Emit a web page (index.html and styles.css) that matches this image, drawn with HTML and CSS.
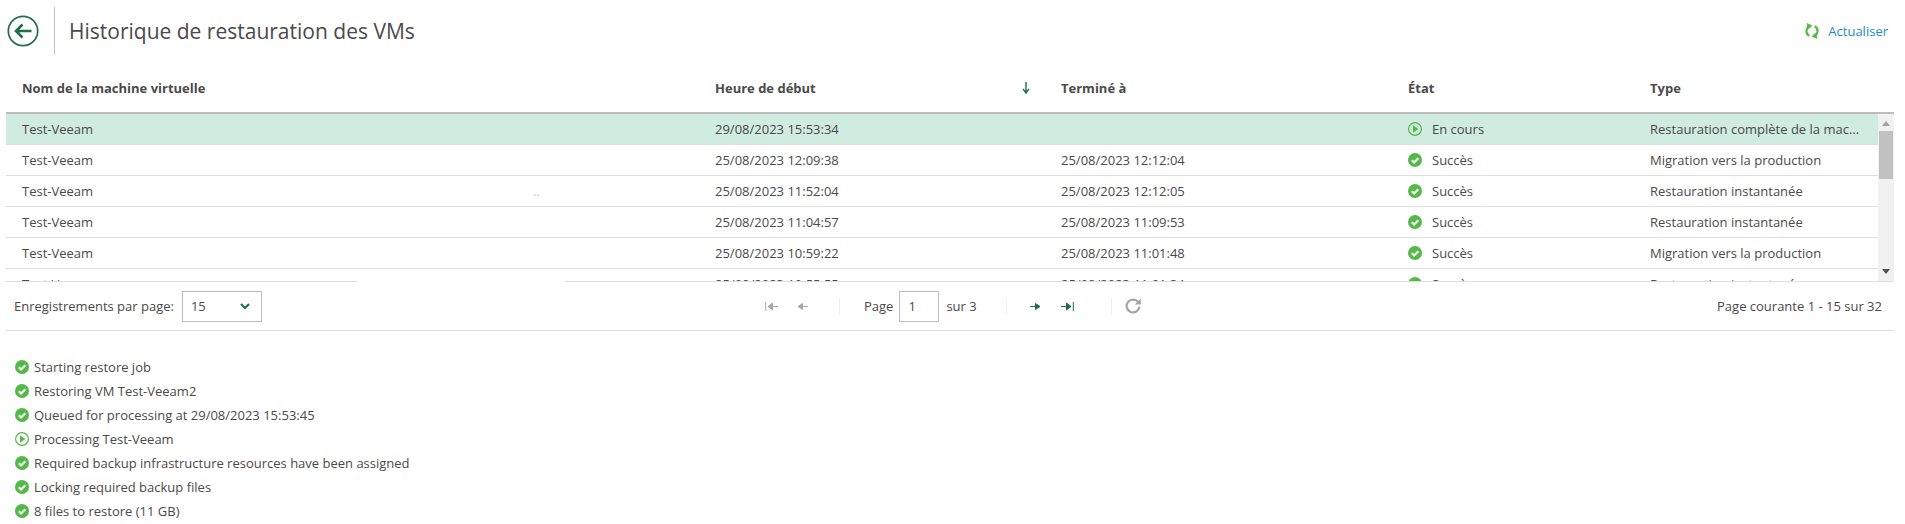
FILE: index.html
```html
<!DOCTYPE html>
<html lang="fr">
<head>
<meta charset="utf-8">
<title>Historique de restauration des VMs</title>
<link rel="stylesheet" href="styles.css">
</head>
<body>
<svg class="defs" width="0" height="0" aria-hidden="true">
  <symbol id="ok" viewBox="0 0 14 14">
    <circle cx="7" cy="7" r="7" fill="#54b948"/>
    <path d="M3.8 7.2 6.1 9.5 10.3 5.2" fill="none" stroke="#fff" stroke-width="2.1"/>
  </symbol>
  <symbol id="run" viewBox="0 0 14 14">
    <circle cx="7" cy="7" r="6.4" fill="none" stroke="#54b948" stroke-width="1.2"/>
    <path d="M5 3.2 10.4 7 5 10.8Z" fill="#54b948"/>
  </symbol>
</svg>
<main class="page">
  <header class="topbar">
    <svg class="back" width="32" height="32" viewBox="0 0 32 32">
      <circle cx="16" cy="16" r="14.7" fill="none" stroke="#236d4c" stroke-width="1.7"/>
      <path d="M24.5 16H10M15.5 9.5 9 16l6.5 6.5" fill="none" stroke="#236d4c" stroke-width="2.6"/>
    </svg>
    <span class="divider"></span>
    <h1 class="title">Historique de restauration des VMs</h1>
    <a class="refresh-link">
      <svg width="14" height="16" viewBox="0 0 14 16">
        <path d="M6 2.8A5.4 5.4 0 0 0 4.2 12.8M8 13.2A5.4 5.4 0 0 0 9.8 3.2" fill="none" stroke="#54b948" stroke-width="2.2"/>
        <path d="M1.6 0 7.4 2.4 2.8 6.4ZM12.4 16 6.6 13.6 11.2 9.6Z" fill="#54b948"/>
      </svg>
      <span>Actualiser</span>
    </a>
  </header>

  <div class="grid-row head">
    <div class="cell">Nom de la machine virtuelle</div>
    <div class="cell"></div>
    <div class="cell sort">Heure de début
      <svg width="8" height="12" viewBox="0 0 8 12"><path d="M4 0V10M1 7l3 4 3-4" fill="none" stroke="#236d4c" stroke-width="1.4"/></svg>
    </div>
    <div class="cell">Terminé à</div>
    <div class="cell">État</div>
    <div class="cell">Type</div>
  </div>

  <div class="table-body">
    <div class="rows">
      <div class="grid-row row selected">
        <div class="cell">Test-Veeam</div><div class="cell"></div>
        <div class="cell">29/08/2023 15:53:34</div><div class="cell"></div>
        <div class="cell state"><svg class="ico"><use href="#run"/></svg>En cours</div>
        <div class="cell ellipsis">Restauration complète de la machine virtuelle</div>
      </div>
      <div class="grid-row row">
        <div class="cell">Test-Veeam</div><div class="cell"></div>
        <div class="cell">25/08/2023 12:09:38</div><div class="cell">25/08/2023 12:12:04</div>
        <div class="cell state"><svg class="ico"><use href="#ok"/></svg>Succès</div>
        <div class="cell ellipsis">Migration vers la production</div>
      </div>
      <div class="grid-row row">
        <div class="cell">Test-Veeam</div><div class="cell dots">..</div>
        <div class="cell">25/08/2023 11:52:04</div><div class="cell">25/08/2023 12:12:05</div>
        <div class="cell state"><svg class="ico"><use href="#ok"/></svg>Succès</div>
        <div class="cell ellipsis">Restauration instantanée</div>
      </div>
      <div class="grid-row row">
        <div class="cell">Test-Veeam</div><div class="cell"></div>
        <div class="cell">25/08/2023 11:04:57</div><div class="cell">25/08/2023 11:09:53</div>
        <div class="cell state"><svg class="ico"><use href="#ok"/></svg>Succès</div>
        <div class="cell ellipsis">Restauration instantanée</div>
      </div>
      <div class="grid-row row">
        <div class="cell">Test-Veeam</div><div class="cell"></div>
        <div class="cell">25/08/2023 10:59:22</div><div class="cell">25/08/2023 11:01:48</div>
        <div class="cell state"><svg class="ico"><use href="#ok"/></svg>Succès</div>
        <div class="cell ellipsis">Migration vers la production</div>
      </div>
      <div class="grid-row row">
        <div class="cell">Test-Veeam</div><div class="cell"></div>
        <div class="cell">25/08/2023 10:55:55</div><div class="cell">25/08/2023 11:01:34</div>
        <div class="cell state"><svg class="ico"><use href="#ok"/></svg>Succès</div>
        <div class="cell ellipsis">Restauration instantanée</div>
      </div>
    </div>
    <div class="scrollbar">
      <span class="arrow up"></span>
      <span class="thumb"></span>
      <span class="arrow down"></span>
    </div>
  </div>

  <footer class="pager">
    <span class="patch"></span>
    <div class="per-page">
      <span>Enregistrements par page:</span>
      <div class="select">
        <span>15</span>
        <svg width="10" height="7" viewBox="0 0 10 7"><path d="M1 1l4 4 4-4" fill="none" stroke="#236d4c" stroke-width="2.2"/></svg>
      </div>
    </div>
    <div class="nav">
      <svg class="n1" width="13" height="9" viewBox="0 0 13 9"><path d="M.7 0V9M13 4.5H4M7.5 1 3 4.5 7.5 8Z" fill="#a8a8a8" stroke="#a8a8a8" stroke-width="1"/></svg>
      <svg class="n2" width="11" height="9" viewBox="0 0 11 9"><path d="M11 4.5H3M5.5 1.5 1 4.5 5.5 7.5Z" fill="#a8a8a8" stroke="#a8a8a8" stroke-width="1"/></svg>
      <span class="sep s1"></span>
      <span class="n3">Page</span>
      <span class="page-input">1</span>
      <span class="n4">sur 3</span>
      <span class="sep s2"></span>
      <svg class="n5" width="11" height="9" viewBox="0 0 11 9"><path d="M0 4.5H8M5.5 1.5 10 4.5 5.5 7.5Z" fill="#236d4c" stroke="#236d4c" stroke-width="1"/></svg>
      <svg class="n6" width="13" height="9" viewBox="0 0 13 9"><path d="M12.3 0V9M0 4.5H9M5.5 1 10 4.5 5.5 8Z" fill="#236d4c" stroke="#236d4c" stroke-width="1"/></svg>
      <span class="sep s3"></span>
      <svg class="n7" width="16" height="16" viewBox="0 0 16 16"><path d="M13.2 4.2A6.4 6.4 0 1 0 14.4 8.6" fill="none" stroke="#a5a5a5" stroke-width="2.2"/><path d="M15.8 .6V6.6H9.8Z" fill="#a5a5a5"/></svg>
    </div>
    <div class="summary">Page courante 1 - 15 sur 32</div>
  </footer>

  <ul class="log">
    <li><svg class="ico"><use href="#ok"/></svg>Starting restore job</li>
    <li><svg class="ico"><use href="#ok"/></svg>Restoring VM Test-Veeam2</li>
    <li><svg class="ico"><use href="#ok"/></svg>Queued for processing at 29/08/2023 15:53:45</li>
    <li><svg class="ico"><use href="#run"/></svg>Processing Test-Veeam</li>
    <li><svg class="ico"><use href="#ok"/></svg>Required backup infrastructure resources have been assigned</li>
    <li><svg class="ico"><use href="#ok"/></svg>Locking required backup files</li>
    <li><svg class="ico"><use href="#ok"/></svg>8 files to restore (11 GB)</li>
  </ul>
</main>
</body>
</html>
```

FILE: styles.css
```css
html, body {
  margin: 0;
  height: 524px;
  overflow: hidden;
  background: #fff;
}
body {
  font-family: "Open Sans", "Noto Sans", sans-serif;
  font-size: 13px;
  color: #4a4a4a;
}
.defs { position: absolute; }
.page {
  width: 1888px;
  margin-left: 6px;
}
.topbar {
  display: flex;
  align-items: center;
  height: 62px;
}
.back { margin-left: 1px; }
.divider {
  width: 1px;
  height: 48px;
  margin: 0 14px 0 15px;
  background: #c4c4c4;
}
.title {
  margin: 0;
  font-size: 21px;
  font-weight: 400;
  color: #4a4a4a;
}
.refresh-link {
  display: flex;
  align-items: center;
  gap: 9px;
  margin-left: auto;
  margin-right: 6px;
  color: #1f8ac9;
}
.grid-row {
  display: grid;
  grid-template-columns: 346px 347px 346px 347px 242px 244px;
  align-items: center;
}
.cell {
  padding-left: 16px;
  min-width: 0;
}
.head {
  height: 52px;
  box-sizing: border-box;
  border-bottom: 2px solid #bdbdbd;
  padding-top: 1px;
  font-weight: 700;
}
.sort {
  display: flex;
  align-items: center;
  justify-content: space-between;
  padding-right: 15px;
}
.table-body {
  display: flex;
  height: 167px;
}
.rows {
  width: 1872px;
  overflow: hidden;
}
.row {
  height: 31px;
  box-sizing: border-box;
  border-bottom: 1px solid #dedede;
}
.selected { background: #d0ebe0; }
.state {
  display: flex;
  align-items: center;
}
.ico {
  flex: none;
  width: 14px;
  height: 14px;
  margin-right: 10px;
}
.ellipsis {
  padding-right: 15px;
  white-space: nowrap;
  overflow: hidden;
  text-overflow: ellipsis;
}
.dots {
  padding-left: 181px;
  color: #bcc7d0;
}
.scrollbar {
  width: 16px;
  background: #f1f1f1;
  display: flex;
  flex-direction: column;
  align-items: center;
}
.thumb {
  width: 14px;
  height: 48px;
  margin-top: 5px;
  background: #c1c1c1;
}
.arrow {
  width: 0;
  height: 0;
  border-left: 4px solid transparent;
  border-right: 4px solid transparent;
}
.arrow.up {
  margin-top: 7px;
  border-bottom: 5px solid #a3a3a3;
}
.arrow.down {
  margin-top: auto;
  margin-bottom: 7px;
  border-top: 5px solid #505050;
}
.pager {
  position: relative;
  display: flex;
  align-items: center;
  height: 50px;
  box-sizing: border-box;
  border-top: 1px solid #dedede;
  border-bottom: 1px solid #dedede;
}
.patch {
  position: absolute;
  left: 351px;
  top: -6px;
  width: 208px;
  height: 8px;
  background: #fff;
}
.per-page {
  display: flex;
  align-items: center;
  width: 759px;
  flex: none;
  padding-left: 8px;
  box-sizing: border-box;
}
.select {
  display: flex;
  align-items: center;
  justify-content: space-between;
  box-sizing: border-box;
  width: 80px;
  height: 31px;
  margin-left: 8px;
  padding: 0 11px 0 8px;
  border: 1px solid #bdbdbd;
}
.nav {
  display: flex;
  align-items: center;
}
.sep {
  width: 1px;
  height: 16px;
  background: #f0f0f0;
}
.n2 { margin-left: 19px; }
.s1 { margin-left: 31px; }
.n3 { margin-left: 24px; }
.page-input {
  box-sizing: border-box;
  width: 40px;
  height: 31px;
  line-height: 29px;
  margin-left: 6px;
  padding-left: 8px;
  border: 1px solid #bdbdbd;
}
.n4 { margin-left: 7px; }
.s2 { margin-left: 29px; }
.n5 { margin-left: 23px; }
.n6 { margin-left: 20px; }
.s3 { margin-left: 37px; }
.n7 { margin-left: 13px; }
.summary {
  margin-left: auto;
  margin-right: 12px;
}
.log {
  list-style: none;
  margin: 24px 0 0;
  padding: 0 0 0 9px;
}
.log li {
  display: flex;
  align-items: center;
  height: 24px;
}
.log .ico { margin-right: 5px; }
```
